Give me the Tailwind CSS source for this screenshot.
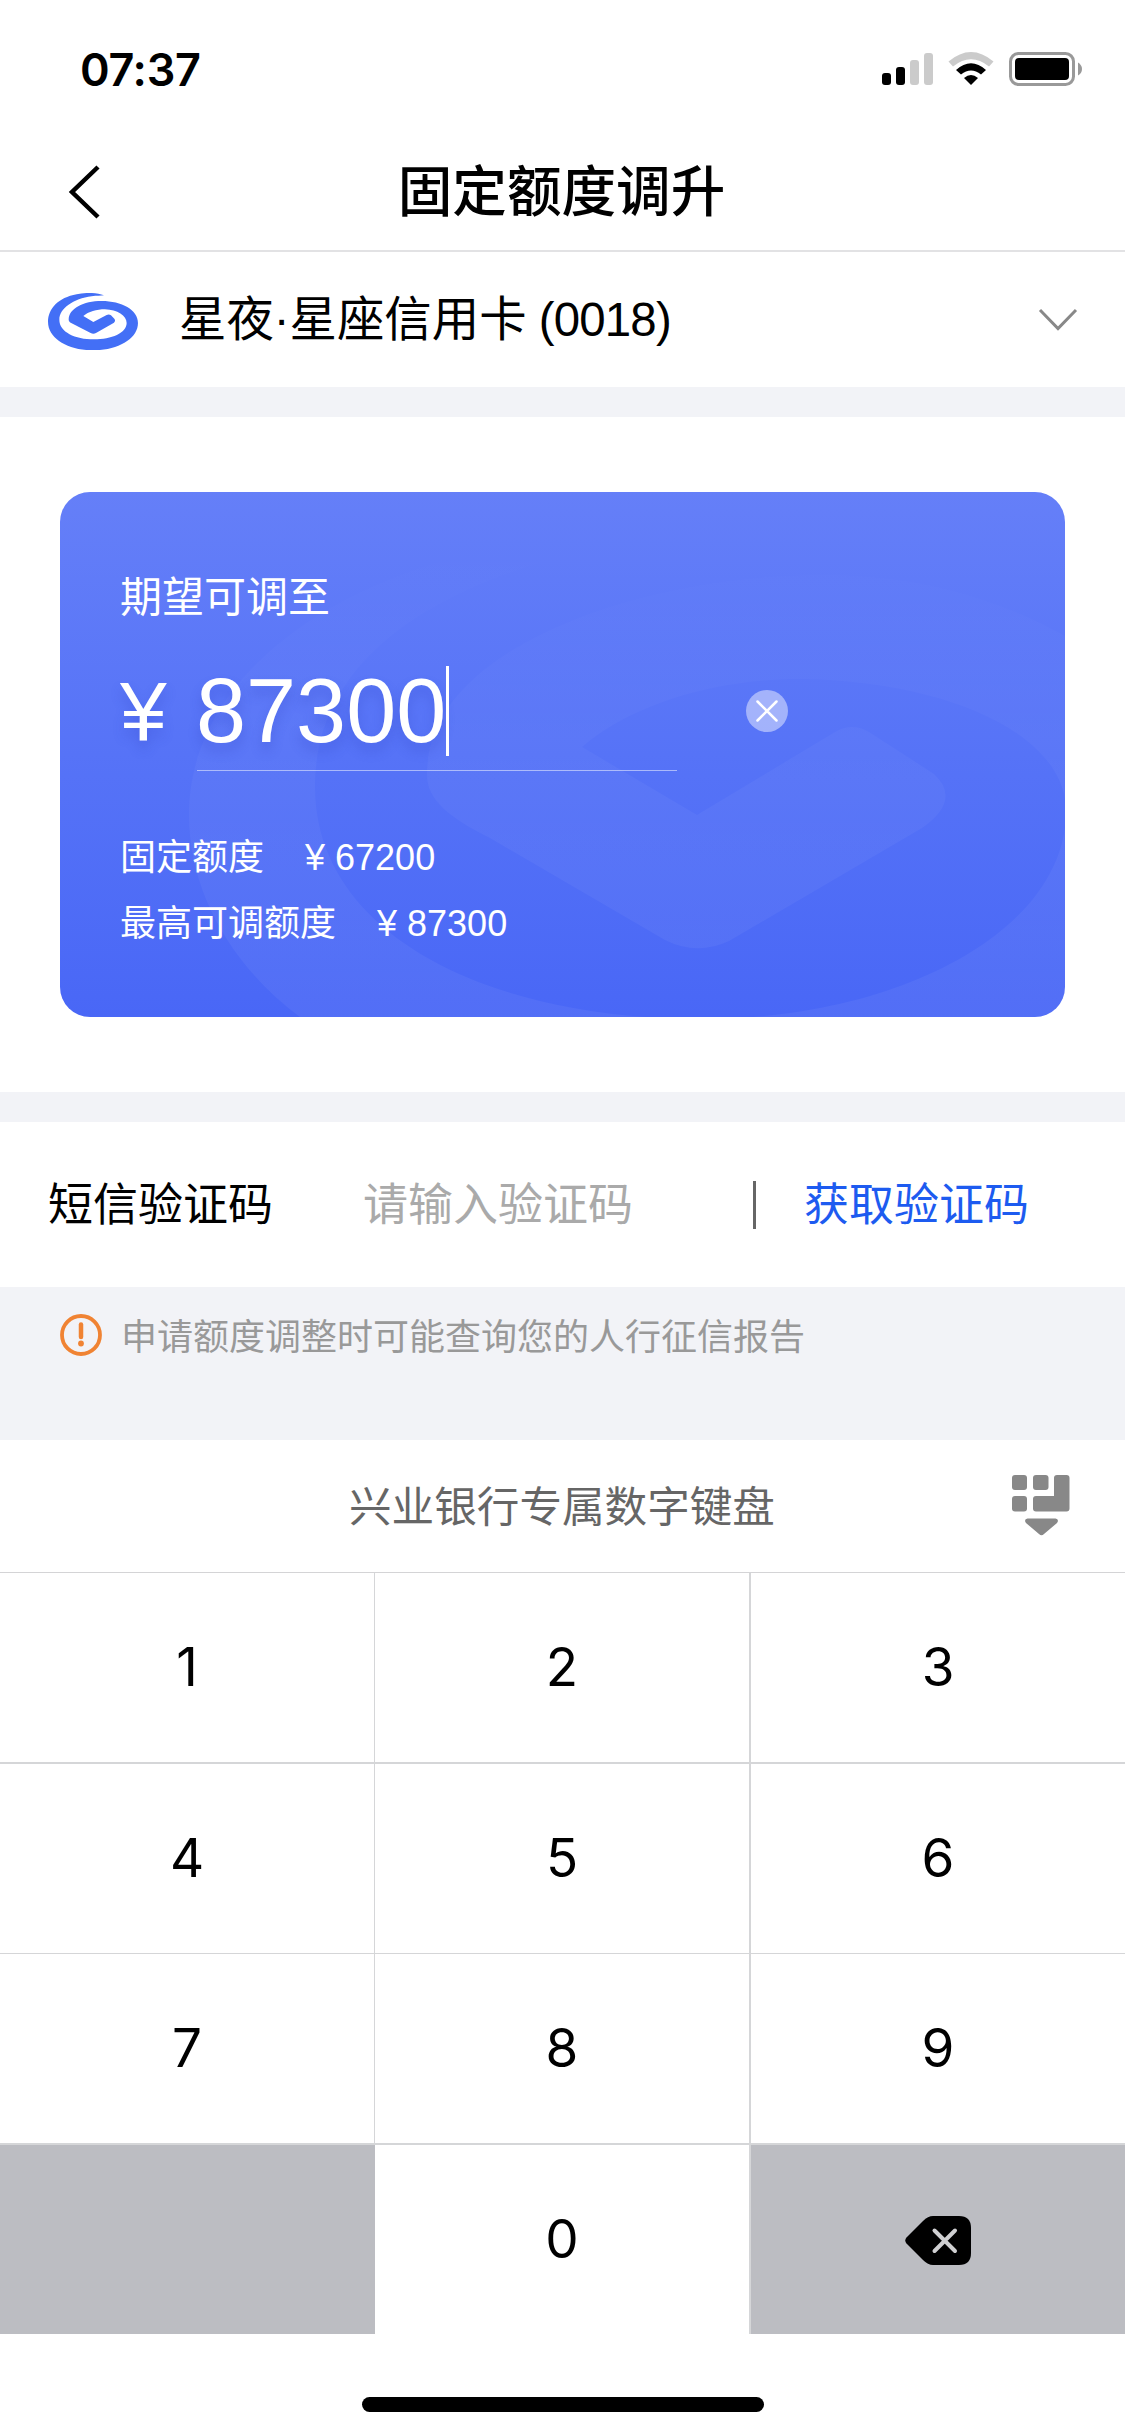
<!DOCTYPE html>
<html lang="zh-CN">
<head>
<meta charset="utf-8">
<title>固定额度调升</title>
<script src="https://cdn.jsdelivr.net/npm/@tailwindcss/browser@4"></script>
</head>
<body class="bg-white">
<div class="w-[1125px] h-[2436px] flex flex-col overflow-hidden bg-white text-black font-['Liberation_Sans','Noto_Sans_CJK_SC',sans-serif]">
  <!-- status bar -->
  <div class="h-[132px] shrink-0 flex items-start justify-between pl-[80px] pr-[42px]">
    <div class="mt-[43px] h-[54px] leading-[54px] text-[45px] font-semibold tracking-[-0.3px] font-['Inter',sans-serif]">07:37</div>
    <svg class="mt-[50px]" width="201" height="38" viewBox="882 50 201 38">
      <rect x="882" y="73" width="9" height="12" rx="3"/><rect x="896" y="67" width="9" height="18" rx="3"/>
      <g fill="#cbcbcb"><rect x="910" y="60" width="9" height="25" rx="3"/><rect x="924" y="53" width="9" height="32" rx="3"/></g>
      <path d="M948.500 61.500Q971 42.500 993.500 61.500L989 66.500Q971 52 953 66.500Z" fill="#cbcbcb"/>
      <path d="M956 70Q971 56.500 986 70L981 74.500Q971 66.500 961 74.500Z"/>
      <path d="M964 78Q971 72 978 78L971 85Z"/>
      <rect x="1010.500" y="53.500" width="63" height="31" rx="8" fill="none" stroke="#999" stroke-width="3"/>
      <rect x="1015" y="58" width="54" height="22" rx="4"/>
      <path d="M1078 62.500Q1082 65 1082 69Q1082 73 1078 75.500Z" fill="#999"/>
    </svg>
  </div>
  <!-- navigation bar -->
  <div class="h-[120px] shrink-0 grid grid-cols-[120px_1fr_120px] items-center border-b-2 border-[#e2e2e4]">
    <svg class="ml-[66px] mt-px" width="36" height="60" viewBox="66 162 36 60"><path d="M98 167L72 192L98 217" fill="none" stroke="#000" stroke-width="4.500"/></svg>
    <div class="pt-[3px] pr-[2px] text-center text-[54.600px] leading-[80px] font-medium">固定额度调升</div>
  </div>
  <!-- card selector -->
  <div class="h-[135px] shrink-0 flex items-center pl-[48px] pr-[47px]">
    <svg class="mt-[4px]" width="90" height="57.300" viewBox="54 68 270 172" fill="#436ff6">
      <path d="M222 75C200 66 165 66 140 72C85 82 54 115 54 155C54 205 115 240 189 240C265 240 324 205 324 158C324 118 275 92 215 92C160 92 116 115 116 148C116 152 119 155 122 157L182 188Q190 192 198 188L252 157Q258 151 253 145L243 135Q237 130 230 134L190 155L160 137C175 124 200 117 225 117C262 119 290 135 290 158C290 188 245 207 192 207C135 207 88 185 88 148C88 115 130 85 185 78C200 76 212 76 222 75Z"/>
    </svg>
    <div class="mt-px ml-[41px] flex-1 text-[47.400px] leading-[70px]">星夜·星座信用卡 <span class="tracking-[-0.8px] -ml-px">(0018)</span></div>
    <svg width="40" height="26" viewBox="0 0 40 26"><path d="M2 3L20 21.500L38 3" fill="none" stroke="#888" stroke-width="3"/></svg>
  </div>
  <div class="h-[30px] shrink-0 bg-[#f2f3f7]"></div>
  <!-- limit card -->
  <div class="h-[675px] shrink-0 px-[60px] pt-[75px]">
    <div class="relative h-[525px] rounded-[30px] overflow-hidden bg-linear-to-b from-[#657ff8] via-[#5673f7] to-[#4967f6] text-white px-[60px] pt-[76px]">
      <svg class="absolute inset-0" width="1005" height="525" viewBox="60 492 1005 525">
        <defs><linearGradient id="fade" gradientUnits="userSpaceOnUse" x1="0" y1="540" x2="0" y2="1017"><stop offset="0" stop-color="#fff" stop-opacity="0"/><stop offset=".5" stop-color="#fff" stop-opacity=".035"/><stop offset="1" stop-color="#fff" stop-opacity=".05"/></linearGradient></defs>
        <path fill="url(#fade)" d="M700 530C420 520 189 640 189 815C189 890 230 965 300 1017V1100H1200V700L1065 636C1010 605 940 582 871 577C780 568 640 585 540 635C470 670 427 715 427 775C427 800 450 818 490 838L665 940Q697 956 729 941L922 828Q962 800 934 774L869 732Q852 722 835 732L697 815L582 747C630 705 715 678 804 679C950 682 1066 735 1066 811C1066 930 900 1019 702 1019C480 1019 315 930 315 787C315 640 470 560 700 530Z"/>
      </svg>
      <div class="relative">
        <div class="text-[42px] leading-[60px]">期望可调至</div>
        <div class="flex items-center h-[143px]">
          <span class="mt-[23px] w-[77px] text-[84px] leading-[90px] text-shadow-[0_8px_12px_rgb(50_70_200/0.3)]">¥</span>
          <div class="w-[480px] h-[143px] pt-[23px] flex items-center border-b border-white/50">
            <span class="-ml-px text-[90px] leading-[90px] text-shadow-[0_8px_12px_rgb(50_70_200/0.3)]">87300</span>
            <span class="w-[3px] h-[90px] bg-white"></span>
          </div>
          <svg class="mt-[22px] ml-[69px]" width="42" height="42"><circle cx="21" cy="21" r="21" fill="#fff" fill-opacity=".45"/><path d="M11.500 11.500L30.500 30.500M30.500 11.500L11.500 30.500" stroke="#fff" stroke-width="2.500" stroke-linecap="round"/></svg>
        </div>
        <div class="mt-[54px] flex flex-col text-[36px] leading-[66px]">
          <div class="flex gap-[41px]"><span>固定额度</span><span>¥ 67200</span></div>
          <div class="flex gap-[41px]"><span>最高可调额度</span><span>¥ 87300</span></div>
        </div>
      </div>
    </div>
  </div>
  <div class="h-[30px] shrink-0 bg-[#f2f3f7]"></div>
  <!-- sms code -->
  <div class="h-[165px] shrink-0 flex items-center pl-[48px] text-[45px] leading-[66px]">
    <span class="mt-[2px] w-[315px]">短信验证码</span>
    <span class="mt-[2px] w-[390px] text-[#aaa]">请输入验证码</span>
    <span class="w-[3px] h-[48px] bg-[#666]"></span>
    <span class="mt-[2px] ml-[48px] text-[#1d5bf0]">获取验证码</span>
  </div>
  <div class="h-[153px] shrink-0 bg-[#f2f3f7] pt-[22px] pl-[60px] flex items-start">
    <svg class="mt-[5px]" width="42" height="42"><circle cx="21" cy="21" r="19" fill="none" stroke="#f08333" stroke-width="3.800"/><path d="M21 10.500V23" stroke="#f08333" stroke-width="4.500" stroke-linecap="round"/><circle cx="21" cy="29.500" r="2.900" fill="#f08333"/></svg>
    <span class="ml-[19px] text-[36px] leading-[58px] text-[#999]">申请额度调整时可能查询您的人行征信报告</span>
  </div>
  <!-- keypad -->
  <div class="h-[133px] shrink-0 grid grid-cols-[1fr_auto_1fr] items-center border-b border-[#d4d4d6]">
    <div class="col-start-2 pt-[2px] pr-px text-[42.600px] leading-[62px] text-[#666]">兴业银行专属数字键盘</div>
    <svg class="justify-self-end mr-[55px]" width="58" height="62" viewBox="0 0 58 62" fill="#888">
      <rect x="0" y="0" width="15" height="15" rx="3"/><rect x="21" y="0" width="15.500" height="15" rx="3"/><rect x="0" y="21" width="15" height="15.500" rx="3"/>
      <path d="M45 0H54.500Q57.500 0 57.500 3V33.500Q57.500 36.500 54.500 36.500H24Q21 36.500 21 33.500V24Q21 21 24 21H42V3Q42 0 45 0Z"/>
      <path d="M15.500 43.500H43.500Q47.500 44.500 45 48L32 59Q29.500 61.500 27 59L14 48Q11.500 44.500 15.500 43.500Z"/>
    </svg>
  </div>
  <div class="h-[761px] shrink-0 grid grid-cols-[375px_376px_374px] grid-rows-[191px_190px_191px_189px] text-[53px] font-['Inter',sans-serif] [&>div]:flex [&>div]:items-center [&>div]:justify-center [&>div]:pt-px">
    <div class="border-r border-b-2 border-[#d5d6d8]">1</div><div class="border-r-2 border-b-2 border-[#d5d6d8]">2</div><div class="border-b-2 border-[#d5d6d8]">3</div>
    <div class="border-r border-b border-[#d5d6d8]">4</div><div class="border-r-2 border-b border-[#d5d6d8]">5</div><div class="border-b border-[#d5d6d8]">6</div>
    <div class="border-r border-b-2 border-[#d5d6d8]">7</div><div class="border-r-2 border-b-2 border-[#d5d6d8]">8</div><div class="border-b-2 border-[#d5d6d8]">9</div>
    <div class="bg-[#bcbdc2]"></div><div class="border-r-2 border-[#d5d6d8]">0</div>
    <div class="bg-[#bcbdc2]"><svg width="66" height="49" viewBox="0 0 66 49"><path d="M1.500 21.500L18 5Q23 0 28 0H54Q66 0 66 12V37Q66 49 54 49H28Q23 49 18 44L1.500 27.500Q-1 24.500 1.500 21.500Z"/><path d="M29.500 14.500L50 35M50 14.500L29.500 35" stroke="#d0d0d2" stroke-width="4" stroke-linecap="round"/></svg></div>
  </div>
  <!-- home indicator -->
  <div class="flex-1 flex justify-center items-start pt-[63px]"><div class="w-[402px] h-[15px] rounded-full bg-black"></div></div>
</div>
</body>
</html>
